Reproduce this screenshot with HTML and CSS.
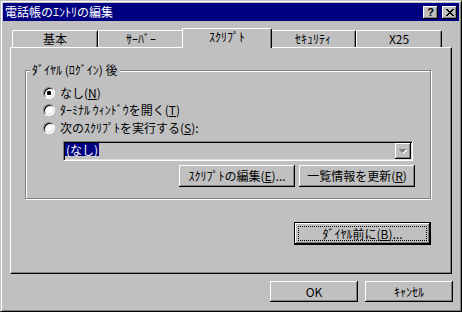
FILE: index.html
```html
<!DOCTYPE html>
<html lang="ja">
<head>
  <meta charset="UTF-8" />
  <title>電話帳のｴﾝﾄﾘの編集</title>
  <link rel="stylesheet" href="styles.css">
</head>
<body>

<div class="window">

  <!-- Caption bar -->
  <div class="titlebar">
    <span class="title">電話帳のｴﾝﾄﾘの編集</span>
    <span class="cap-btn help">?</span>
    <span class="cap-btn close">
      <svg width="8" height="7" viewBox="0 0 8 7"><path fill="#000" d="M0 0h2v1H0z M6 0h2v1H6z M1 1h2v1H1z M5 1h2v1H5z M2 2h4v1H2z M3 3h2v1H3z M2 4h4v1H2z M1 5h2v1H1z M5 5h2v1H5z M0 6h2v1H0z M6 6h2v1H6z"/></svg>
    </span>
  </div>

  <div class="sheet">
    <div class="tabs">
      <div class="tab">基本</div>
      <div class="tab">ｻｰﾊﾞｰ</div>
      <div class="tab active">ｽｸﾘﾌﾟﾄ</div>
      <div class="tab">ｾｷｭﾘﾃｨ</div>
      <div class="tab">X25</div>
    </div>

    <div class="panel">
      <div class="group">
        <span class="group-title">ﾀﾞｲﾔﾙ (ﾛｸﾞｲﾝ) 後</span>

        <div class="option first"><span class="radio"><span class="dot"></span></span>なし(<u>N</u>)</div>
        <div class="option"><span class="radio"></span>ﾀｰﾐﾅﾙ ｳｨﾝﾄﾞｳを開く(<u>T</u>)</div>
        <div class="option last"><span class="radio"></span>次のｽｸﾘﾌﾟﾄを実行する(<u>S</u>):</div>

        <div class="combo">
          <span class="combo-text">(なし)</span>
          <span class="combo-btn">
            <svg width="8" height="5" viewBox="0 0 8 5">
              <path fill="#fff" d="M1 1h7v1H1z M2 2h5v1H2z M3 3h3v1H3z M4 4h1v1H4z"/>
              <path fill="#808080" d="M0 0h7v1H0z M1 1h5v1H1z M2 2h3v1H2z M3 3h1v1H3z"/>
            </svg>
          </span>
        </div>

        <div class="group-buttons">
          <span class="btn">ｽｸﾘﾌﾟﾄの編集(<u>E</u>)...</span>
          <span class="btn">一覧情報を更新(<u>R</u>)</span>
        </div>
      </div>

      <div class="panel-buttons">
        <span class="btn default"><span class="focus">ﾀﾞｲﾔﾙ前に(<u>B</u>)...</span></span>
      </div>
    </div>
  </div>

  <div class="footer">
    <span class="btn small">OK</span>
    <span class="btn small">ｷｬﾝｾﾙ</span>
  </div>

</div>

</body>
</html>
```

FILE: styles.css
```css
body {
  margin: 0;
  font-family: "Noto Sans CJK JP", sans-serif;
  font-size: 12px;
  color: #000;
}

u {
  text-decoration: underline;
  text-underline-offset: 1px;
}

/* Outer frame */
.window {
  width: 462px;
  height: 312px;
  box-sizing: border-box;
  background: #c0c0c0;
  border: 1px solid;
  border-color: #c0c0c0 #000 #000 #c0c0c0;
  box-shadow: inset 1px 1px #fff, inset -1px -1px #808080;
  padding: 2px;
  display: flex;
  flex-direction: column;
}

.titlebar {
  height: 18px;
  background: #000080;
  color: #fff;
  display: flex;
  align-items: center;
  padding: 0 2px 0 2px;
}

.title {
  flex: 1;
  line-height: 14px;
}

.cap-btn {
  width: 15px;
  height: 13px;
  box-sizing: border-box;
  background: #c0c0c0;
  box-shadow: inset -1px -1px #000, inset 1px 1px #fff, inset -2px -2px #808080;
  display: flex;
  align-items: center;
  justify-content: center;
}

.cap-btn.help {
  margin-right: 4px;
  color: #000;
  font: bold 11px "Liberation Sans", sans-serif;
  line-height: 11px;
}

/* Property sheet */
.sheet {
  margin: 7px 7px 0 7px;
}

.tabs {
  display: flex;
  align-items: flex-end;
  height: 19px;
  padding-left: 2px;
}

.tab {
  width: 86px;
  height: 17px;
  box-sizing: border-box;
  border: 1px solid #fff;
  border-bottom: 0;
  border-right-color: #000;
  border-radius: 2px 2px 0 0;
  box-shadow: inset -1px 0 #808080;
  background: #c0c0c0;
  display: flex;
  align-items: center;
  justify-content: center;
  line-height: 14px;
}

.tab.active {
  width: 90px;
  height: 20px;
  margin: 0 -2px -1px;
  padding-bottom: 3px;
  position: relative;
  z-index: 1;
}

.panel {
  height: 227px;
  box-sizing: border-box;
  border: 1px solid;
  border-color: #fff #000 #000 #fff;
  box-shadow: inset -1px -1px #808080;
  display: flex;
  flex-direction: column;
}

/* Group box */
.group {
  margin: 22px 0 0 14px;
  width: 406px;
  height: 129px;
  box-sizing: border-box;
  border: 1px solid #808080;
  box-shadow: inset 1px 1px #fff, 1px 1px #fff;
  display: flex;
  flex-direction: column;
  align-items: flex-start;
}

.group-title {
  margin: -8px 0 0 4px;
  padding: 0 2px;
  height: 14px;
  line-height: 14px;
  background: #c0c0c0;
}

.option {
  display: flex;
  align-items: center;
  height: 17px;
  padding-left: 17px;
  line-height: 14px;
}

.option.first {
  margin-top: 7px;
}

.option.last {
  margin-top: 1px;
}

.radio {
  width: 12px;
  height: 12px;
  box-sizing: border-box;
  border-radius: 50%;
  border: 1px solid;
  border-color: #808080 #fff #fff #808080;
  box-shadow: inset 1px 1px #000, inset -1px -1px #dfdfdf;
  background: #fff;
  margin-right: 5px;
  display: flex;
  align-items: center;
  justify-content: center;
}

.dot {
  width: 4px;
  height: 4px;
  border-radius: 1px;
  background: #000;
}

.combo {
  margin: 5px 0 0 37px;
  width: 350px;
  height: 20px;
  box-sizing: border-box;
  border: 1px solid;
  border-color: #808080 #fff #fff #808080;
  box-shadow: inset 1px 1px #000, inset -1px -1px #dfdfdf;
  padding: 1px;
  display: flex;
  align-items: flex-start;
}

.combo-text {
  height: 13px;
  line-height: 13px;
  padding: 0 1px;
  background: #000080;
  color: #fff;
}

.combo-btn {
  margin-left: auto;
  width: 16px;
  height: 16px;
  box-sizing: border-box;
  box-shadow: inset -1px -1px #000, inset 1px 1px #fff, inset -2px -2px #808080;
  display: flex;
  align-items: center;
  justify-content: center;
}

/* Buttons */
.btn {
  width: 116px;
  height: 22px;
  box-sizing: border-box;
  background: #c0c0c0;
  box-shadow: inset -1px -1px #000, inset 1px 1px #fff, inset -2px -2px #808080;
  display: flex;
  align-items: center;
  justify-content: center;
  line-height: 14px;
  white-space: nowrap;
}

.group-buttons {
  align-self: stretch;
  display: flex;
  justify-content: flex-end;
  gap: 4px;
  margin: 4px 15px 0 0;
}

.panel-buttons {
  display: flex;
  justify-content: flex-end;
  margin: 23px 20px 0 0;
}

.btn.default {
  width: 137px;
  height: 23px;
  border: 1px solid #000;
  padding: 3px;
  align-items: stretch;
}

.focus {
  flex: 1;
  border: 1px dotted #000;
  display: flex;
  align-items: center;
  justify-content: center;
}

.footer {
  display: flex;
  justify-content: flex-end;
  gap: 7px;
  margin-top: 7px;
  padding-right: 6px;
}

.btn.small {
  width: 88px;
  height: 21px;
}
```
